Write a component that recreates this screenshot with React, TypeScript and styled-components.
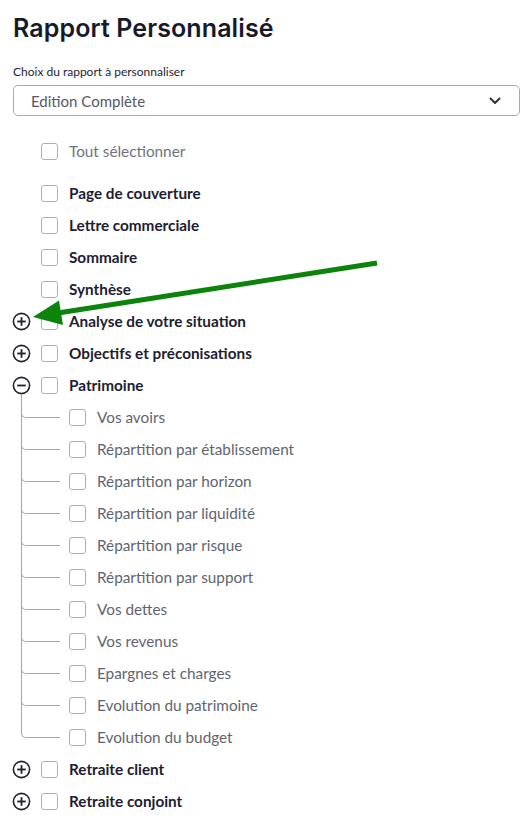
import React from 'react';
import styled, { createGlobalStyle } from 'styled-components';

const GlobalStyle = createGlobalStyle`
  body {
    margin: 0;
    background: #ffffff;
    font-family: 'Lato', 'Liberation Sans', sans-serif;
  }
`;

const Page = styled.div`
  position: relative;
  width: 532px;
  height: 825px;
  box-sizing: border-box;
  padding: 12px 12px 0 13px;
  overflow: hidden;
`;

const Title = styled.h1`
  margin: 0;
  font-family: 'Inter', 'Liberation Sans', sans-serif;
  font-weight: 600;
  font-size: 25px;
  line-height: 32px;
  color: #171a2b;
  letter-spacing: 0.1px;
`;

const FieldLabel = styled.div`
  margin-top: 20px;
  font-size: 12px;
  line-height: 16px;
  color: #1f2230;
`;

const Select = styled.div`
  margin-top: 5px;
  height: 31px;
  box-sizing: border-box;
  border: 1px solid #a4abb6;
  border-radius: 5px;
  display: flex;
  align-items: center;
  justify-content: space-between;
  padding: 0 18px 0 17px;
  font-size: 15px;
  color: #545866;
`;

const List = styled.div`
  margin-top: 19px;
  display: flex;
  flex-direction: column;
`;

const Row = styled.div<{ $indent?: boolean; $gapAfter?: boolean }>`
  position: relative;
  height: 32px;
  display: flex;
  align-items: center;
  gap: 11px;
  padding-left: ${({ $indent }) => ($indent ? '28px' : '0')};
  margin-bottom: ${({ $gapAfter }) => ($gapAfter ? '10px' : '0')};
`;

const ToggleSlot = styled.div`
  width: 17px;
  height: 17px;
  flex: 0 0 17px;
  display: flex;
  align-items: center;
  justify-content: center;
`;

const Box = styled.span`
  width: 17px;
  height: 17px;
  flex: 0 0 17px;
  box-sizing: border-box;
  border: 1px solid #a9b0bb;
  border-radius: 3px;
  background: #fff;
`;

const Label = styled.span<{ $tone: 'bold' | 'muted' | 'child' }>`
  font-size: 15.3px;
  font-weight: ${({ $tone }) => ($tone === 'bold' ? 700 : 400)};
  color: ${({ $tone }) => ($tone === 'bold' ? '#1d2030' : $tone === 'muted' ? '#6f7280' : '#616470')};
`;

const Children = styled.div`
  display: flex;
  flex-direction: column;
`;

const ChildRow = styled(Row)<{ $first?: boolean; $last?: boolean }>`
  &::before {
    content: '';
    position: absolute;
    left: 8px;
    top: ${({ $first }) => ($first ? '-7px' : '-16px')};
    width: 38px;
    height: ${({ $first }) => ($first ? '23px' : '32px')};
    border-left: 1px solid #a3a7ad;
    border-bottom: 1px solid #a3a7ad;
    border-bottom-left-radius: 5px;
  }
  &::after {
    content: '';
    display: ${({ $last }) => ($last ? 'none' : 'block')};
    position: absolute;
    left: 8px;
    top: 12px;
    height: 20px;
    border-left: 1px solid #a3a7ad;
  }
`;

const Toggle = ({ open }: { open: boolean }) => (
  <svg width="19" height="19" viewBox="0 0 19 19" style={{ flex: '0 0 19px' }}>
    <circle cx="9.5" cy="9.5" r="8.1" fill="#fff" stroke="#20222c" strokeWidth="1.6" />
    <line x1="5.2" y1="9.5" x2="13.8" y2="9.5" stroke="#20222c" strokeWidth="1.8" />
    {!open && <line x1="9.5" y1="5.2" x2="9.5" y2="13.8" stroke="#20222c" strokeWidth="1.8" />}
  </svg>
);

const Chevron = () => (
  <svg width="12" height="8" viewBox="0 0 12 8">
    <path d="M1.5 1.5 L6 6 L10.5 1.5" fill="none" stroke="#2c3345" strokeWidth="2" strokeLinecap="round" strokeLinejoin="round" />
  </svg>
);

const Overlay = styled.svg`
  position: absolute;
  left: 0;
  top: 0;
  pointer-events: none;
`;

const topItems = ['Page de couverture', 'Lettre commerciale', 'Sommaire', 'Synthèse'];

const patrimoine = [
  'Vos avoirs',
  'Répartition par établissement',
  'Répartition par horizon',
  'Répartition par liquidité',
  'Répartition par risque',
  'Répartition par support',
  'Vos dettes',
  'Vos revenus',
  'Epargnes et charges',
  'Evolution du patrimoine',
  'Evolution du budget',
];

export default function App() {
  return (
    <Page>
      <GlobalStyle />
      <Title>Rapport Personnalisé</Title>
      <FieldLabel>Choix du rapport à personnaliser</FieldLabel>
      <Select>
        <span>Edition Complète</span>
        <Chevron />
      </Select>
      <List>
        <Row $gapAfter>
          <ToggleSlot />
          <Box />
          <Label $tone="muted">Tout sélectionner</Label>
        </Row>
        {topItems.map((t) => (
          <Row key={t}>
            <ToggleSlot />
            <Box />
            <Label $tone="bold">{t}</Label>
          </Row>
        ))}
        <Row>
          <ToggleSlot><Toggle open={false} /></ToggleSlot>
          <Box />
          <Label $tone="bold">Analyse de votre situation</Label>
        </Row>
        <Row>
          <ToggleSlot><Toggle open={false} /></ToggleSlot>
          <Box />
          <Label $tone="bold">Objectifs et préconisations</Label>
        </Row>
        <Row>
          <ToggleSlot><Toggle open /></ToggleSlot>
          <Box />
          <Label $tone="bold">Patrimoine</Label>
        </Row>
        <Children>
          {patrimoine.map((t, i) => (
            <ChildRow key={t} $indent $first={i === 0} $last={i === patrimoine.length - 1}>
              <ToggleSlot />
              <Box />
              <Label $tone="child">{t}</Label>
            </ChildRow>
          ))}
        </Children>
        <Row>
          <ToggleSlot><Toggle open={false} /></ToggleSlot>
          <Box />
          <Label $tone="bold">Retraite client</Label>
        </Row>
        <Row>
          <ToggleSlot><Toggle open={false} /></ToggleSlot>
          <Box />
          <Label $tone="bold">Retraite conjoint</Label>
        </Row>
      </List>
      <Overlay width="532" height="825" viewBox="0 0 532 825">
        <line x1="377" y1="263" x2="58" y2="313" stroke="#0c840c" strokeWidth="5" />
        <polygon points="33,317 59,300.5 63,325" fill="#0c840c" />
      </Overlay>
    </Page>
  );
}
